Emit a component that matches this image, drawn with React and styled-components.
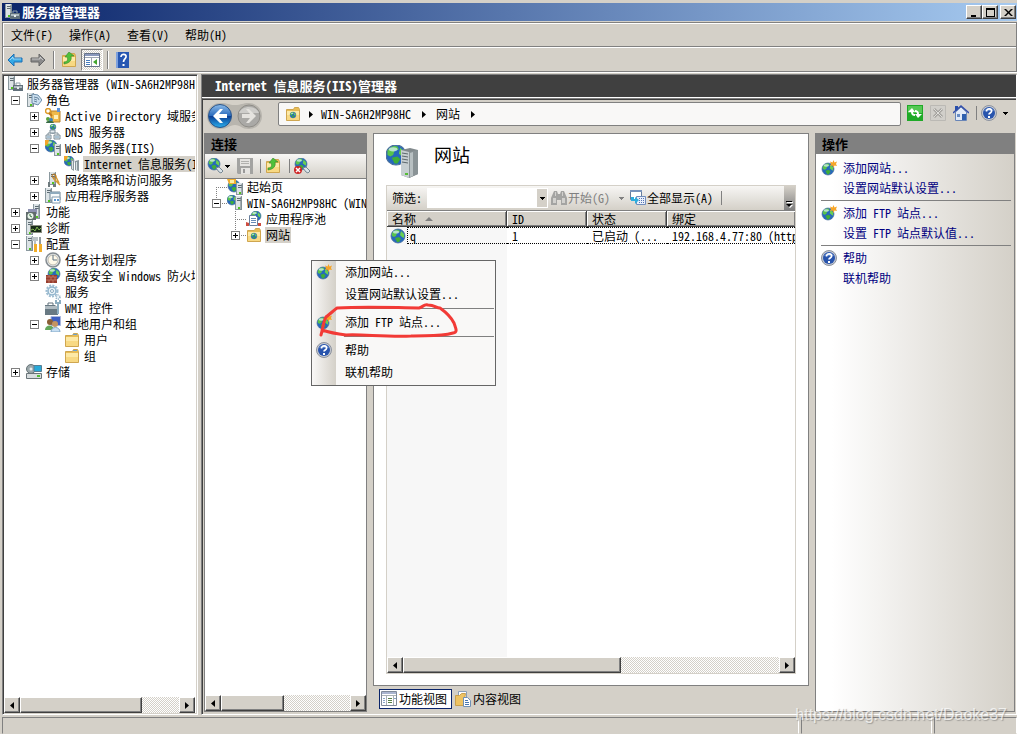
import { Fragment } from "react";
import styled, { createGlobalStyle, css } from "styled-components";

export default function App() {
  return (
    <Window>
      <GlobalStyle />
      <TitleBar>
        <ServerCaseIcon />
        <WindowTitle>服务器管理器</WindowTitle>
        <CaptionButton aria-label="最小化">
          <CaptionGlyph d="M2 8h5v2H2z" />
        </CaptionButton>
        <CaptionButton aria-label="最大化">
          <CaptionGlyph d="M1 1h9v9H1zM2 3v6h7V3z" />
        </CaptionButton>
        <CaptionButton aria-label="关闭" $gap>
          <CaptionGlyph d="M1 2h2l2.500 2.500L8 2h2L6.500 5.500L10 9H8L5.500 6.500L3 9H1l3.500-3.500z" />
        </CaptionButton>
      </TitleBar>

      <Chrome>
        <MenuBar>
          {MENUS.map((menu) => (
            <MenuButton key={menu}>{menu}</MenuButton>
          ))}
        </MenuBar>
        <MainToolbar>
          <ToolButton aria-label="后退">
            <ArrowIcon color="#35a9e6" edge="#1c6fb4" />
          </ToolButton>
          <ToolButton aria-label="前进" $gap={7}>
            <ArrowIcon color="#8b8b8b" edge="#666" flip />
          </ToolButton>
          <ToolDivider $gap={7} />
          <ToolButton aria-label="向上一级" $gap={6}>
            <FolderUpIcon />
          </ToolButton>
          <ToggleButton aria-label="显示/隐藏控制台树" aria-pressed="true">
            <ConsoleIcon />
          </ToggleButton>
          <ToolDivider $gap={4} />
          <ToolButton aria-label="帮助" $gap={5}>
            <HelpBookIcon />
          </ToolButton>
        </MainToolbar>
      </Chrome>

      <Workspace>
        <ServerPanel>
          <ServerTree>
            {SERVER_TREE.map((node) => (
              <TreeRow key={node.label} $level={node.level}>
                {node.level > 0 && <Expander state={node.state} />}
                <node.icon />
                <TreeLabel $selected={node.selected} $fill>
                  {node.label}
                </TreeLabel>
              </TreeRow>
            ))}
          </ServerTree>
          <ScrollBar thumb={77} />
        </ServerPanel>

        <ManagerPanel>
          <ManagerTitle>Internet 信息服务(IIS)管理器</ManagerTitle>
          <ManagerBody>
            <NavRow>
              <NavButtonsIcon />
              <AddressBar>
                <FolderGlobeIcon />
                <Crumb width={20} />
                <AddressText>WIN-SA6H2MP98HC</AddressText>
                <Crumb width={25} />
                <AddressText>网站</AddressText>
                <Crumb width={25} />
              </AddressBar>
              <NavTools>
                <ToolButton aria-label="刷新">
                  <RefreshIcon />
                </ToolButton>
                <ToolButton aria-label="停止">
                  <StopIcon />
                </ToolButton>
                <ToolButton aria-label="主页">
                  <HomeIcon />
                </ToolButton>
                <HelpGroup>
                  <ToolDivider $dark />
                  <ToolButton aria-label="联机帮助" $gap={4}>
                    <HelpIcon />
                  </ToolButton>
                  <DownCaret gap={6} />
                </HelpGroup>
              </NavTools>
            </NavRow>

            <Panes>
              <ConnectionsPane>
                <PaneHeader>连接</PaneHeader>
                <ConnectionsToolbar>
                  <ToolButton aria-label="连接">
                    <ConnectIcon />
                  </ToolButton>
                  <DownCaret gap={2} />
                  <ToolButton aria-label="保存" $gap={7}>
                    <SaveIcon />
                  </ToolButton>
                  <ToolDivider $dark $gap={7} />
                  <ToolButton aria-label="向上" $gap={4}>
                    <FolderUpIcon />
                  </ToolButton>
                  <ToolDivider $dark $gap={8} />
                  <ToolButton aria-label="断开连接" $gap={4}>
                    <ConnectIcon broken />
                  </ToolButton>
                </ConnectionsToolbar>
                <ConnectionsTree>
                  {CONNECTIONS.map((node) => (
                    <TreeRow key={node.label} $level={node.level}>
                      <Guide $corner={node.corner}>
                        {node.state && <Expander state={node.state} />}
                      </Guide>
                      <node.icon />
                      <TreeLabel $selected={node.selected}>
                        {node.label}
                      </TreeLabel>
                    </TreeRow>
                  ))}
                </ConnectionsTree>
                <ScrollBar thumb={49} />
              </ConnectionsPane>

              <CenterColumn>
                <FeaturePane>
                  <PageHeading>
                    <SitesIcon />
                    <HeadingText>网站</HeadingText>
                  </PageHeading>
                  <ListFrame>
                    <FilterBar>
                      <FilterLabel htmlFor="filter">筛选:</FilterLabel>
                      <FilterInput id="filter" type="text" />
                      <ComboButton aria-label="筛选选项">
                        <DownCaret />
                      </ComboButton>
                      <FilterButton disabled>
                        <BinocularsIcon />
                        开始(G)
                      </FilterButton>
                      <CaretSlot>
                        <DownCaret color="#808080" />
                      </CaretSlot>
                      <FilterButton>
                        <ShowAllIcon />
                        全部显示(A)
                      </FilterButton>
                      <ToolDivider $dark $gap={8} />
                      <OverflowButton aria-label="更多">
                        <OverflowGlyph />
                      </OverflowButton>
                    </FilterBar>
                    <ListArea>
                      <SiteTable>
                        <thead>
                          <tr>
                            <HeadCell $width={120}>
                              名称
                              <SortMark />
                            </HeadCell>
                            <HeadCell $width={80}>ID</HeadCell>
                            <HeadCell $width={80}>状态</HeadCell>
                            <HeadCell>绑定</HeadCell>
                          </tr>
                        </thead>
                        <tbody>
                          <tr>
                            <SiteCell $first>
                              <SiteName>
                                <GlobeIcon />
                                <FocusText>q</FocusText>
                              </SiteName>
                            </SiteCell>
                            <SiteCell>1</SiteCell>
                            <SiteCell>已启动 (...</SiteCell>
                            <SiteCell>192.168.4.77:80 (http)</SiteCell>
                          </tr>
                        </tbody>
                      </SiteTable>
                    </ListArea>
                    <ScrollBar thumb={58} />
                  </ListFrame>
                </FeaturePane>
                <ViewTabs>
                  <ViewTab $active>
                    <FeatureViewIcon />
                    功能视图
                  </ViewTab>
                  <ViewTab>
                    <ContentViewIcon />
                    内容视图
                  </ViewTab>
                </ViewTabs>
              </CenterColumn>

              <ActionsPane>
                <PaneHeader>操作</PaneHeader>
                <ActionList>
                  {ACTION_GROUPS.map((group, index) => (
                    <Fragment key={group[0].label}>
                      {index > 0 && <ActionRule />}
                      {group.map((action) => (
                        <ActionRow key={action.label}>
                          <IconSlot>{action.icon && <action.icon />}</IconSlot>
                          <ActionLink href="#">{action.label}</ActionLink>
                        </ActionRow>
                      ))}
                    </Fragment>
                  ))}
                </ActionList>
              </ActionsPane>
            </Panes>
          </ManagerBody>
        </ManagerPanel>
      </Workspace>

      <StatusBar>
        <StatusCell $grow />
        <StatusCell $width={131} />
        <StatusCell $width={83} />
      </StatusBar>

      <ContextMenu>
        {CONTEXT_GROUPS.map((group, index) => (
          <Fragment key={group[0].label}>
            {index > 0 && <MenuRule />}
            {group.map((action) => (
              <ContextItem key={action.label}>
                <IconSlot>{action.icon && <action.icon />}</IconSlot>
                {action.label}
              </ContextItem>
            ))}
          </Fragment>
        ))}
      </ContextMenu>
      <RedMark viewBox="0 0 144 40">
        <path d="M4 34C6 28 6 21 9 16C13 13 16 10 20 7C52 5 82 7 102 7C107 6 106 3 111 4C118 4 119 7 123 7C130 12 135 18 137 22C139 28 141 31 136 32C122 36 108 34 94 35C68 36 44 33 29 34C21 33 14 32 5 29" />
      </RedMark>
      <Watermark>https://blog.csdn.net/Daoke37</Watermark>
    </Window>
  );
}

/* ---------- small parts ---------- */

function CaptionGlyph({ d }) {
  return (
    <svg width="11" height="11" viewBox="0 0 11 11">
      <path d={d} fill="#000" fillRule="evenodd" />
    </svg>
  );
}

function DownCaret({ gap = 0, color = "#000" }) {
  return (
    <CaretSvg $gap={gap} viewBox="0 0 5 3" shapeRendering="crispEdges">
      <path d="M0 0h5v1H0zM1 1h3v1H1zM2 2h1v1H2z" fill={color} />
    </CaretSvg>
  );
}

function Expander({ state }) {
  if (!state) return <ExpanderSlot />;
  return (
    <ExpanderSlot>
      <ExpanderButton aria-label={state === "open" ? "折叠" : "展开"}>
        <svg width="9" height="9" viewBox="0 0 9 9" shapeRendering="crispEdges">
          <path d="M0 0h9v9H0z" fill="#808080" />
          <path d="M1 1h7v7H1z" fill="#fff" />
          <path d="M2 4h5v1H2z" />
          {state === "closed" && <path d="M4 2h1v5H4z" />}
        </svg>
      </ExpanderButton>
    </ExpanderSlot>
  );
}

function ScrollBar({ thumb }) {
  return (
    <ScrollTrack>
      <ScrollButton aria-label="向左滚动">
        <svg width="4" height="7" viewBox="0 0 4 7">
          <path d="M4 0v7L0 3.500z" />
        </svg>
      </ScrollButton>
      <ScrollLane>
        <ScrollThumb $size={thumb} />
      </ScrollLane>
      <ScrollButton aria-label="向右滚动">
        <svg width="4" height="7" viewBox="0 0 4 7">
          <path d="M0 0v7l4-3.500z" />
        </svg>
      </ScrollButton>
    </ScrollTrack>
  );
}

function Crumb({ width }) {
  return (
    <CrumbSlot $width={width}>
      <svg width="4" height="7" viewBox="0 0 4 7">
        <path d="M0 0v7l4-3.500z" />
      </svg>
    </CrumbSlot>
  );
}

/* ---------- icon pieces ---------- */

function Icon({ children, size = 16 }) {
  return (
    <IconSvg width={size} height={size} viewBox="0 0 16 16">
      {children}
    </IconSvg>
  );
}

function Globe({ x = 8, y = 8, r = 7 }) {
  return (
    <g transform={`translate(${x} ${y}) scale(${r / 7})`}>
      <circle r="7" fill="#2668bd" stroke="#49709c" strokeWidth="0.800" />
      <path d="M-6 -3C-4-6-1-7 1-6L2-4L-1-3L-2 0L-4 1L-6 0z" fill="#58c34b" />
      <path d="M-3 2L1 1L3 3L1 6L-1 6z" fill="#3fae38" />
      <path d="M3-5L6-2L6 2L4 1L2-1z" fill="#69cf52" />
      <ellipse cx="-2" cy="-4" rx="3" ry="1.500" fill="#dff4ff" opacity="0.700" />
    </g>
  );
}

function Server({ x = 0, y = 0, h = 14 }) {
  return (
    <g transform={`translate(${x} ${y})`}>
      <path d={`M0 0h7v${h}H0z`} fill="#8b999f" />
      <path d={`M1 0h5v${h - 1}H1z`} fill="#dce3e6" />
      <path d="M2 2h4v1H2zM2 4h4v1H2z" fill="#5d6b72" />
      <path d={`M5 1h2v${h - 1}H5z`} fill="#7d898f" opacity="0.600" />
      <path d={`M3 ${h - 3}h2v2H3z`} fill="#53c422" />
    </g>
  );
}

function FolderShape() {
  return (
    <>
      <path d="M1.500 3.500h7l1-2h4l1 2v11h-13z" fill="#e8bd55" stroke="#cfa650" />
      <path d="M2 5h12v9H2z" fill="#f8d983" />
      <path d="M2 5h12v4H2z" fill="#fde9a6" />
    </>
  );
}

function ServerCaseIcon() {
  return (
    <Icon>
      <Server x={1} y={0} h={14} />
      <path d="M6 9h10v6H6z" fill="#62717b" />
      <path d="M7 10h8v2H7z" fill="#adb9c0" />
      <path d="M9 9V7h4v2" fill="none" stroke="#8fa0a9" />
      <path d="M10 11h2v2h-2z" fill="#e9eef0" />
    </Icon>
  );
}

function RolesIcon() {
  return (
    <Icon>
      <Server x={1} y={1} h={14} />
      <path d="M6 2l6 1l4 5l-4 5l-6-2z" fill="#cbdfee" stroke="#6e8fab" />
      <path d="M8 5l4 1l1 2M8 7l3 1M8 9l3 1" fill="none" stroke="#6785a0" />
    </Icon>
  );
}

function DirectoryIcon() {
  return (
    <Icon>
      <path d="M6 3h9v11H6z" fill="#f0bb4b" stroke="#b7812c" />
      <path d="M12 0h3v4h-3z" fill="#5c91d8" />
      <path d="M9 7h4v4H9z" fill="#fff1ba" />
      <circle cx="3" cy="3" r="2.500" fill="none" stroke="#dd9b28" strokeWidth="1.500" />
      <path d="M4 5l3 3" stroke="#c27b16" strokeWidth="2" />
      <circle cx="3" cy="11" r="2" fill="#5aa13c" />
      <circle cx="6" cy="12" r="2" fill="#3c83bd" />
      <path d="M1 15c0-3 7-3 8 0z" fill="#386c45" />
    </Icon>
  );
}

function DnsIcon() {
  return (
    <Icon>
      <Globe x={8} y={3} r={3} />
      <path d="M8 6v4M3 11V9h10v2" fill="none" stroke="#81929c" />
      <path d="M5 6h5v3H5zM1 11h5v4H1zM9 11h6v4H9z" fill="#e5ecf0" stroke="#7e909b" />
      <path d="M2 13h3M10 13h4" stroke="#6a96b5" />
    </Icon>
  );
}

function WebServerIcon() {
  return (
    <Icon>
      <Globe x={6} y={6} r={6} />
      <path d="M0 0h4l-1 4l-3 2z" fill="#f2a52b" />
      <Server x={9} y={4} h={12} />
    </Icon>
  );
}

function IisIcon() {
  return (
    <Icon>
      <Globe x={5} y={5} r={5} />
      <path d="M0 0h4l-1 3l-3 2z" fill="#f2a52b" />
      <path d="M7 4l3-1v12l-3-2zM11 5l4-1v11l-4-1z" fill="#8c999f" />
      <path d="M8 5h1v8H8zM12 6h1v8h-1z" fill="#dbe4e7" />
    </Icon>
  );
}

function PolicyIcon() {
  return (
    <Icon>
      <Server x={4} y={0} h={13} />
      <path d="M10 3l4 8M8 6l7 7" stroke="#d79b35" strokeWidth="1.500" />
      <circle cx="9" cy="4" r="2" fill="none" stroke="#b77923" />
      <path d="M3 10h2v5H3zM8 12h3v3H8z" fill="#6e7a7e" />
    </Icon>
  );
}

function AppServerIcon() {
  return (
    <Icon>
      <Server x={0} y={0} h={15} />
      <path d="M5 4h10v8H5z" fill="#f7fafb" stroke="#6f8494" />
      <path d="M5 4h10v2H5z" fill="#8eaabd" />
      <path d="M7 9h8v6H7z" fill="#fff" stroke="#829aac" />
      <path d="M9 11h2v2H9zM12 11h2v2h-2z" fill="#5c97d1" />
    </Icon>
  );
}

function FeaturesIcon() {
  return (
    <Icon>
      <Server x={7} y={0} h={15} />
      <path d="M2 5h9v5H2z" fill="#8d91b0" />
      <path d="M0 8h10v8H0z" fill="#606b6b" />
      <circle cx="4.500" cy="12" r="3" fill="#e9f5e9" />
      <path d="M4 10v2l2 1" fill="none" stroke="#366c43" />
    </Icon>
  );
}

function DiagnosticsIcon() {
  return (
    <Icon>
      <Server x={0} y={0} h={15} />
      <path d="M4 5h12v8H4z" fill="#8a8e80" />
      <path d="M5 6h10v6H5z" fill="#182b18" />
      <path d="M5 10l2-1l2 2l2-4l2 3l2-2" fill="none" stroke="#80b64f" />
    </Icon>
  );
}

function ConfigIcon() {
  return (
    <Icon>
      <Server x={0} y={0} h={15} />
      <path d="M9 1v12M7 1v3h4V1" fill="none" stroke="#bac2c5" strokeWidth="2" />
      <path d="M8 8h3v8H8zM13 8h3v8h-3z" fill="#f2ae29" />
      <path d="M14 1v7" stroke="#6f7a7f" strokeWidth="1.500" />
    </Icon>
  );
}

function ClockIcon() {
  return (
    <Icon>
      <circle cx="8" cy="8" r="7" fill="#e4e9ed" stroke="#858c91" strokeWidth="1.500" />
      <circle cx="8" cy="8" r="5" fill="#fff9e9" stroke="#bcb9ad" />
      <path d="M8 3v5h4" fill="none" stroke="#5b7083" />
    </Icon>
  );
}

function FirewallIcon() {
  return (
    <Icon>
      <Globe x={9} y={6} r={6} />
      <path d="M1 7h11v8H1z" fill="#973d2e" />
      <path d="M1 9h11M1 12h11M4 7v2M8 7v2M6 9v3M10 9v3M4 12v3M8 12v3" stroke="#c98672" strokeWidth="0.700" />
    </Icon>
  );
}

function GearIcon() {
  return (
    <Icon>
      <circle cx="7" cy="7" r="5.500" fill="none" stroke="#9ebdd2" strokeWidth="2" strokeDasharray="2 1.200" />
      <circle cx="7" cy="7" r="4" fill="#e8f2f8" stroke="#8fb3cb" strokeWidth="1.500" />
      <circle cx="7" cy="7" r="1.500" fill="#fff" stroke="#88a9be" />
      <circle cx="13" cy="13" r="2" fill="#e8f2f8" stroke="#8dabc0" strokeWidth="1.500" strokeDasharray="1 1" />
    </Icon>
  );
}

function ToolboxIcon() {
  return (
    <Icon>
      <path d="M0 5h10l3 3v7H0z" fill="#687983" />
      <path d="M0 6h12v3H0z" fill="#b0bbc1" />
      <path d="M3 5V3h5v2" fill="none" stroke="#61717a" />
      <path d="M13 3v11M11 0v3h4V0" fill="none" stroke="#8cadc0" strokeWidth="2" />
    </Icon>
  );
}

function UsersIcon() {
  return (
    <Icon>
      <path d="M6 .5h9.500v9H6z" fill="#3f60c2" stroke="#a9b7dd" />
      <circle cx="5" cy="6" r="3" fill="#8b5f36" />
      <path d="M0 14c0-6 9-6 9 0z" fill="#63a65b" />
      <circle cx="10" cy="8" r="3" fill="#c49461" />
      <path d="M6 16c0-6 9-6 9 0z" fill="#c8dff2" stroke="#83a8c8" />
    </Icon>
  );
}

function FolderIcon() {
  return (
    <Icon>
      <FolderShape />
      <path d="M9 2h4v1H9z" fill="#6ca1cf" />
    </Icon>
  );
}

function StorageIcon() {
  return (
    <Icon>
      <circle cx="5" cy="5" r="4.500" fill="#9ca8ab" stroke="#667377" />
      <circle cx="5" cy="5" r="1.500" fill="#e8edee" />
      <path d="M8 1.500h7.500v6H8z" fill="#29a9d8" stroke="#587f94" />
      <path d="M.5 9.500h15v5H.5z" fill="#d8dddf" stroke="#697478" />
      <path d="M11 11h3v2h-3z" fill="#55bd36" />
    </Icon>
  );
}

function StartPageIcon() {
  return (
    <Icon>
      <Globe x={7} y={7} r={6} />
      <path d="M0 0h9v5H2z" fill="#f1af31" />
      <path d="M3 1h4v3H3z" fill="#fff1a5" />
      <Server x={9} y={4} h={12} />
    </Icon>
  );
}

function HostIcon() {
  return (
    <Icon>
      <Globe x={5} y={5} r={5} />
      <Server x={8} y={1} h={14} />
    </Icon>
  );
}

function AppPoolIcon() {
  return (
    <Icon>
      <Globe x={10} y={5} r={5} />
      <path d="M3.500 4.500h6l2 2v8h-8z" fill="#fff" stroke="#687f9d" />
      <path d="M5 7.500h5M5 9.500h5M5 11.500h5" stroke="#668bb7" />
      <path d="M0 11l3 1v3H0zM12 12h3v3h-3z" fill="#cd4d41" />
    </Icon>
  );
}

function FolderGlobeIcon() {
  return (
    <Icon>
      <FolderShape />
      <Globe x={8} y={9} r={3} />
    </Icon>
  );
}

function GlobeIcon() {
  return (
    <Icon>
      <Globe />
    </Icon>
  );
}

function NewSiteIcon() {
  return (
    <Icon>
      <Globe x={7} y={9} r={6} />
      <path d="M12.500 0l1 2.500l2.500-1l-1 2.500l1 2l-2.500-.5l-1 2.500l-1-2.500l-2.500.5l1-2l-1-2.500l2.500 1z" fill="#f7a527" />
    </Icon>
  );
}

function HelpIcon() {
  return (
    <Icon>
      <circle cx="8" cy="8" r="7.500" fill="#c5c9d2" stroke="#8c929e" />
      <circle cx="8" cy="8" r="6" fill="#2854ad" />
      <path d="M3 6c2-4 8-4 10 0z" fill="#83a8df" opacity="0.600" />
      <path d="M5.500 6.500c0-4 6-3 5 0c-.5 1.500-2.500 1.500-2.500 3" fill="none" stroke="#fff" strokeWidth="1.700" />
      <path d="M7 11h2v2H7z" fill="#fff" />
    </Icon>
  );
}

function ArrowIcon({ color, edge, flip }) {
  const mirror = flip ? "matrix(-1 0 0 1 16 0)" : undefined;
  return (
    <Icon>
      <path d="M1 8l6-6v4h8v4H7v4z" fill={color} stroke={edge} transform={mirror} />
      <path d="M3 8l3-3v2h8" fill="none" stroke="#fff" opacity="0.500" transform={mirror} />
    </Icon>
  );
}

function FolderUpIcon() {
  return (
    <Icon>
      <FolderShape />
      <path d="M3 10c4 0 4-3 3-5H4l4-5l5 4h-3c1 4-1 7-7 8z" fill="#4fc13a" stroke="#35842a" strokeWidth="0.600" />
    </Icon>
  );
}

function ConsoleIcon() {
  return (
    <Icon>
      <path d="M.5 1.500h15v13H.5z" fill="#fff" stroke="#687489" />
      <path d="M1 2h14v2H1z" fill="#8a99bd" />
      <path d="M1 5h14v1H1zM7 6h1v8H7z" fill="#9da5b2" />
      <path d="M2 8h4v1H2zM2 10h4v1H2zM2 12h4v1H2z" fill="#477dbe" />
      <path d="M13 7v6l-4-3z" fill="#43a52e" />
    </Icon>
  );
}

function HelpBookIcon() {
  return (
    <Icon>
      <path d="M2 0h13v16H2z" fill="#2757b2" />
      <path d="M2 0h2v16H2z" fill="#7da0dd" />
      <path d="M7 5c0-4 6-3 5 0c-.5 2-2.500 2-2.500 5" fill="none" stroke="#fff" strokeWidth="1.700" />
      <path d="M8.500 12h2v2h-2z" fill="#fff" />
    </Icon>
  );
}

function ConnectIcon({ broken }) {
  return (
    <Icon>
      <Globe x={7} y={6} r={6} />
      <path d="M9 10l3-1l4 4l-2 2l-2-1z" fill="#dbe4e9" stroke="#778893" />
      {broken && (
        <>
          <circle cx="4" cy="12" r="4" fill="#ce2424" />
          <path d="M2 10l4 4M6 10l-4 4" stroke="#fff" strokeWidth="1.500" />
        </>
      )}
    </Icon>
  );
}

function SaveIcon() {
  return (
    <Icon>
      <path d="M0 0h16v16H1L0 15z" fill="#a3a3a1" />
      <path d="M3 1h10v7H3zM4 10h9v6H4z" fill="#e5e4e1" />
      <path d="M4 3h8v1H4zM4 5h8v1H4z" fill="#b1b1ae" />
      <path d="M6 11h2v4H6z" fill="#999" />
    </Icon>
  );
}

function RefreshIcon() {
  return (
    <Icon>
      <path d="M0 0h16v16H0z" fill="#1faa27" />
      <path d="M1 1h14v7H1z" fill="#55c853" />
      <path d="M5 3L1 7h3c0 3 2 4 4 4V9C7 9 6 9 6 7h2zM11 13l4-4h-3c0-3-2-4-4-4v2c1 0 2 0 2 2H8z" fill="#fff" />
    </Icon>
  );
}

function StopIcon() {
  return (
    <Icon>
      <path d="M.5 .5h15v15H.5z" fill="#d1cfca" stroke="#bbb9b4" />
      <path d="M4 4l8 8M12 4l-8 8" stroke="#a4a29e" strokeWidth="3" />
      <path d="M4 4l8 8M12 4l-8 8" stroke="#deddd9" />
    </Icon>
  );
}

function HomeIcon() {
  return (
    <Icon>
      <path d="M2 1h3v5H2z" fill="#284faa" />
      <path d="M2.500 7L8 2l5.500 5v8.500h-11z" fill="#e2eaf7" stroke="#6885b7" />
      <path d="M0 8l8-7l8 7" fill="none" stroke="#334fab" strokeWidth="1.500" />
      <path d="M4 9h3v3H4z" fill="#698cc3" />
      <path d="M9 9h4v6H9z" fill="#2e5fae" />
    </Icon>
  );
}

function BinocularsIcon() {
  return (
    <Icon>
      <path d="M3 1h3l1 3h2l1-3h3l3 7v7h-6v-5H6v5H0V8z" fill="#a4a4a2" />
      <path d="M2 8h3v5H2zM11 8h3v5h-3zM4 2h1v4H4zM11 2h1v4h-1z" fill="#d2d1ce" />
    </Icon>
  );
}

function ShowAllIcon() {
  return (
    <Icon>
      <path d="M.5 .5h11v9H.5z" fill="#fff" stroke="#667d9e" />
      <path d="M0 0h12v2H0z" fill="#7893bc" />
      <path d="M6.500 6.500h9v8h-9z" fill="#e9effa" stroke="#718dbc" />
      <path d="M9.500 8v6M11.500 8v6M13.500 8v6" stroke="#5574b5" strokeDasharray="1 1" />
      <path d="M1 7v4h4v3l4-4l-4-3v2H4V7z" fill="#2daddd" />
    </Icon>
  );
}

function FeatureViewIcon() {
  return (
    <Icon>
      <path d="M.5 .5h15v14H.5z" fill="#fff" stroke="#808a99" />
      <path d="M1 1h14v2H1z" fill="#aab5cf" />
      <path d="M1 4h14v1H1zM5 5h1v9H5zM12 5h1v9h-1z" fill="#abb2b6" />
      <path d="M2 7.500h2M2 9.500h2M2 11.500h2M13 7.500h2" stroke="#8aa6c8" />
      <path d="M7 7.500h4M7 9.500h4M7 11.500h4" stroke="#598045" />
    </Icon>
  );
}

function ContentViewIcon() {
  return (
    <Icon>
      <path d="M3.500 .5h8v10h-8z" fill="#fff" stroke="#899eb8" />
      <path d="M.5 4.500h4l2-2h4l-2 12h-8z" fill="#eec363" stroke="#c9a04e" />
      <path d="M8.500 6.500h4l3 3v6h-7z" fill="#fff" stroke="#6e8fb5" />
      <path d="M10 9.500h3M10 11.500h4M10 13.500h4" stroke="#4776b2" />
    </Icon>
  );
}

function SitesIcon() {
  return (
    <svg width="34" height="34" viewBox="0 0 34 34">
      <Globe x={10} y={10} r={10} />
      <path d="M15 5l9-2l8 2v24l-9 4l-8-3z" fill="#828a8d" />
      <path d="M15 5l8 2v26l-8-3z" fill="#c7cfd1" />
      <path d="M23 7l9-2v24l-9 4z" fill="#8a9396" />
      <path d="M24 8l3-1v24l-3 1z" fill="#b8c0c2" />
      <path d="M16 8l6 1M16 11l6 1M16 14l6 1M16 17l6 1" stroke="#5d686c" />
      <path d="M19 28h3v2h-3z" fill="#55bd36" />
    </svg>
  );
}

function NavButtonsIcon() {
  return (
    <NavButtons>
      <svg width="56" height="28" viewBox="0 0 56 28">
        <defs>
          <linearGradient id="navBlue" x2="0" y2="1">
            <stop offset="0" stopColor="#8bbbe9" />
            <stop offset="0.480" stopColor="#2d6cbd" />
            <stop offset="0.500" stopColor="#0a3a91" />
            <stop offset="1" stopColor="#2bb0ee" />
          </linearGradient>
        </defs>
        <path d="M13 1c9 0 8 2 15 2s7-2 14-2a13 13 0 010 26c-8 0-8-4-14-4s-7 4-15 4a13 13 0 010-26z" fill="#b8b5ae" />
        <circle cx="13" cy="14" r="11.500" fill="url(#navBlue)" stroke="#29548a" />
        <circle cx="42" cy="14" r="11" fill="#aaa9a6" stroke="#8f8d88" />
        <path d="M32 11c3-8 17-8 20 0z" fill="#cecdca" />
        <path d="M6 14l7-7h3l-4 5h8v4h-8l4 5h-3z" fill="#fff" />
        <path d="M49 14l-7-7h-3l4 5h-8v4h8l-4 5h3z" fill="#e5e3df" />
      </svg>
    </NavButtons>
  );
}

function OverflowGlyph() {
  return (
    <svg width="7" height="7" viewBox="0 0 7 7">
      <path d="M1 1h6v1H1zM1 4h6L4 7z" fill="#fff" />
      <path d="M0 0h6v1H0zM0 3h6L3 6z" />
    </svg>
  );
}

/* ---------- data ---------- */

const MENUS = ["文件(F)", "操作(A)", "查看(V)", "帮助(H)"];

const SERVER_TREE = [
  { level: 0, icon: ServerCaseIcon, label: "服务器管理器 (WIN-SA6H2MP98HC)" },
  { level: 1, state: "open", icon: RolesIcon, label: "角色" },
  { level: 2, state: "closed", icon: DirectoryIcon, label: "Active Directory 域服务" },
  { level: 2, state: "closed", icon: DnsIcon, label: "DNS 服务器" },
  { level: 2, state: "open", icon: WebServerIcon, label: "Web 服务器(IIS)" },
  { level: 3, icon: IisIcon, label: "Internet 信息服务(IIS)管理器", selected: true },
  { level: 2, state: "closed", icon: PolicyIcon, label: "网络策略和访问服务" },
  { level: 2, state: "closed", icon: AppServerIcon, label: "应用程序服务器" },
  { level: 1, state: "closed", icon: FeaturesIcon, label: "功能" },
  { level: 1, state: "closed", icon: DiagnosticsIcon, label: "诊断" },
  { level: 1, state: "open", icon: ConfigIcon, label: "配置" },
  { level: 2, state: "closed", icon: ClockIcon, label: "任务计划程序" },
  { level: 2, state: "closed", icon: FirewallIcon, label: "高级安全 Windows 防火墙" },
  { level: 2, icon: GearIcon, label: "服务" },
  { level: 2, icon: ToolboxIcon, label: "WMI 控件" },
  { level: 2, state: "open", icon: UsersIcon, label: "本地用户和组" },
  { level: 3, icon: FolderIcon, label: "用户" },
  { level: 3, icon: FolderIcon, label: "组" },
  { level: 1, state: "closed", icon: StorageIcon, label: "存储" },
];

const CONNECTIONS = [
  { level: 1, corner: "top", icon: StartPageIcon, label: "起始页" },
  { level: 1, corner: "last", state: "open", icon: HostIcon, label: "WIN-SA6H2MP98HC (WIN-SA6H2MP98HC)" },
  { level: 2, corner: "middle", icon: AppPoolIcon, label: "应用程序池" },
  { level: 2, corner: "last", state: "closed", icon: FolderGlobeIcon, label: "网站", selected: true },
];

const ADD_SITE = { icon: NewSiteIcon, label: "添加网站..." };
const SITE_DEFAULTS = { label: "设置网站默认设置..." };
const ADD_FTP = { icon: NewSiteIcon, label: "添加 FTP 站点..." };
const FTP_DEFAULTS = { label: "设置 FTP 站点默认值..." };
const HELP = { icon: HelpIcon, label: "帮助" };
const ONLINE_HELP = { label: "联机帮助" };

const ACTION_GROUPS = [
  [ADD_SITE, SITE_DEFAULTS],
  [ADD_FTP, FTP_DEFAULTS],
  [HELP, ONLINE_HELP],
];

const CONTEXT_GROUPS = [[ADD_SITE, SITE_DEFAULTS], [ADD_FTP], [HELP, ONLINE_HELP]];

/* ---------- styles ---------- */

const GlobalStyle = createGlobalStyle`
  * {
    box-sizing: border-box;
  }

  body {
    margin: 0;
    background: #d4d0c8;
    color: #000;
    font-family: "Noto Sans CJK SC", sans-serif;
    font-feature-settings: "hwid";
    font-size: 12px;
    line-height: 16px;
  }

  button,
  input {
    margin: 0;
    padding: 0;
    border: none;
    border-radius: 0;
    background: none;
    color: inherit;
    font: inherit;
    font-feature-settings: inherit;
  }
`;

const raised = css`
  border: 1px solid;
  border-color: #fff #404040 #404040 #fff;
  box-shadow: inset -1px -1px #808080;
  background: #d4d0c8;
`;

const dither = css`
  background: repeating-conic-gradient(#fff 0 25%, #d4d0c8 0 50%) 0 0 / 2px 2px;
`;

const Window = styled.div`
  position: relative;
  display: flex;
  flex-direction: column;
  height: 100vh;
  padding: 3px 0 0 2px;
  overflow: hidden;
  white-space: nowrap;
`;

const TitleBar = styled.header`
  display: flex;
  align-items: center;
  flex: none;
  height: 18px;
  padding: 0 1px 0 2px;
  margin-bottom: 1px;
  background: linear-gradient(to right, #0a246a, #a6caf0);
`;

const WindowTitle = styled.h1`
  flex: 1;
  margin: 0 0 0 2px;
  color: #fff;
  font-size: 13px;
  font-weight: 700;
`;

const CaptionButton = styled.button`
  ${raised}
  display: flex;
  align-items: center;
  justify-content: center;
  width: 16px;
  height: 14px;
  margin-left: ${({ $gap }) => ($gap ? "2px" : "0")};
`;

const Chrome = styled.div`
  flex: none;
  margin-bottom: 2px;
  border: 1px solid #808080;
  box-shadow: inset 1px 1px #fff, 0 1px #fff;
`;

const MenuBar = styled.nav`
  display: flex;
  align-items: center;
  gap: 16px;
  height: 24px;
  padding-left: 8px;
  border-bottom: 1px solid #808080;
`;

const MenuButton = styled.button``;

const MainToolbar = styled.div`
  display: flex;
  align-items: center;
  height: 24px;
  padding-left: 4px;
  border-top: 1px solid #fff;
`;

const ToolButton = styled.button`
  display: flex;
  margin-left: ${({ $gap }) => $gap || 0}px;
`;

const ToggleButton = styled.button`
  ${dither}
  display: flex;
  align-items: center;
  justify-content: center;
  width: 22px;
  height: 22px;
  margin-left: 4px;
  border: 1px solid;
  border-color: #808080 #fff #fff #808080;
`;

const ToolDivider = styled.span`
  flex: none;
  width: ${({ $dark }) => ($dark ? "1px" : "2px")};
  height: ${({ $dark }) => ($dark ? "14px" : "18px")};
  margin-left: ${({ $gap }) => $gap || 0}px;
  border-left: 1px solid #808080;
  background: #fff;
`;

const CaretSvg = styled.svg`
  flex: none;
  width: 5px;
  height: 3px;
  margin-left: ${({ $gap }) => $gap}px;
`;

const IconSvg = styled.svg`
  flex: none;
  display: block;
`;

const Workspace = styled.div`
  flex: 1;
  display: flex;
  gap: 3px;
  min-height: 0;
  margin-bottom: 2px;
`;

const ServerPanel = styled.aside`
  display: flex;
  flex-direction: column;
  flex: 0 0 196px;
  min-width: 0;
  padding: 1px 2px 1px 1px;
  border: 1px solid;
  border-color: #808080 #fff #fff #808080;
  box-shadow: inset 1px 1px #404040, inset -1px -1px #d4d0c8;
  background: #fff;
`;

const ServerTree = styled.ul`
  flex: 1;
  margin: 0;
  padding: 0 0 0 3px;
  list-style: none;
  overflow: hidden;
`;

const TreeRow = styled.li`
  display: flex;
  align-items: center;
  height: 16px;
  padding-left: ${({ $level }) => Math.max($level - 1, 0) * 19}px;
`;

const ExpanderSlot = styled.span`
  display: flex;
  flex: none;
  width: 19px;
  padding-left: 4px;
`;

const ExpanderButton = styled.button`
  display: flex;
`;

const TreeLabel = styled.span`
  flex: ${({ $fill }) => ($fill ? "1" : "none")};
  height: 16px;
  margin-left: 3px;
  padding: 0 1px;
  background: ${({ $selected }) => ($selected ? "#d4d0c8" : "none")};
`;

const ScrollTrack = styled.div`
  ${dither}
  display: flex;
  flex: none;
  height: 16px;
`;

const ScrollButton = styled.button`
  ${raised}
  display: flex;
  align-items: center;
  justify-content: center;
  flex: none;
  width: 16px;
  height: 16px;
`;

const ScrollLane = styled.div`
  flex: 1;
`;

const ScrollThumb = styled.div`
  ${raised}
  width: ${({ $size }) => $size}%;
  height: 16px;
`;

const ManagerPanel = styled.main`
  display: flex;
  flex-direction: column;
  flex: 1;
  min-width: 0;
  border: 1px solid;
  border-color: #808080 #fff #fff #808080;
`;

const ManagerTitle = styled.h2`
  flex: none;
  height: 23px;
  margin: 0;
  padding: 0 13px;
  border-bottom: 1px solid #fff;
  background: #404040;
  color: #fff;
  font-size: 13px;
  font-weight: 700;
  line-height: 22px;
`;

const ManagerBody = styled.div`
  display: flex;
  flex-direction: column;
  flex: 1;
  min-height: 0;
  padding: 3px 0 2px 1px;
  border-top: 1px solid #808080;
  border-left: 1px solid #404040;
  box-shadow: inset 0 1px #404040;
`;

const NavRow = styled.div`
  display: flex;
  flex: none;
  height: 31px;
`;

const NavButtons = styled.div`
  flex: none;
  width: 74px;
  padding-left: 3px;
  line-height: 0;
`;

const AddressBar = styled.div`
  display: flex;
  align-items: center;
  flex: 1;
  height: 24px;
  padding-left: 6px;
  border: 1px solid #808080;
  border-radius: 2px;
  background: #f9f8f7;
`;

const AddressText = styled.span``;

const CrumbSlot = styled.span`
  display: flex;
  justify-content: center;
  width: ${({ $width }) => $width}px;
`;

const NavTools = styled.div`
  display: flex;
  align-items: center;
  gap: 7px;
  height: 22px;
  padding: 0 8px 0 6px;
`;

const HelpGroup = styled.div`
  display: flex;
  align-items: center;
`;

const Panes = styled.div`
  display: flex;
  flex: 1;
  gap: 6px;
  min-height: 0;
`;

const ConnectionsPane = styled.section`
  display: flex;
  flex-direction: column;
  flex: 0 0 163px;
  min-width: 0;
  border: 1px solid #808080;
  background: #fff;
`;

const PaneHeader = styled.h3`
  flex: none;
  height: 20px;
  margin: 0;
  padding-left: 6px;
  background: #808080;
  font-size: 13px;
  font-weight: 700;
  line-height: 20px;
`;

const ConnectionsToolbar = styled.div`
  display: flex;
  align-items: center;
  flex: none;
  height: 25px;
  padding-left: 2px;
  border-bottom: 1px solid #808080;
  background: linear-gradient(#f7f6f4, #d4d0c8);
`;

const ConnectionsTree = styled.ul`
  flex: 1;
  margin: 0;
  padding: 0 0 0 3px;
  list-style: none;
  overflow: hidden;
`;

const dotsAcross = "repeating-linear-gradient(to right, #808080 0 1px, transparent 1px 2px)";
const dotsDown = "repeating-linear-gradient(#808080 0 1px, transparent 1px 2px)";
const GUIDES = {
  top: `${dotsAcross} 8px 8px / 11px 1px no-repeat, ${dotsDown} 8px 8px / 1px 8px no-repeat`,
  middle: `${dotsAcross} 8px 8px / 11px 1px no-repeat, ${dotsDown} 8px 0 / 1px 16px no-repeat`,
  last: `${dotsAcross} 8px 8px / 11px 1px no-repeat, ${dotsDown} 8px 0 / 1px 8px no-repeat`,
};

const Guide = styled.span`
  display: flex;
  align-items: center;
  flex: none;
  width: 19px;
  height: 16px;
  background: ${({ $corner }) => GUIDES[$corner]};
`;

const CenterColumn = styled.section`
  display: flex;
  flex-direction: column;
  flex: 1;
  min-width: 0;
`;

const FeaturePane = styled.div`
  display: flex;
  flex-direction: column;
  flex: 1;
  min-height: 0;
  padding: 11px 12px;
  border: 1px solid #808080;
  background: #fff;
`;

const PageHeading = styled.div`
  display: flex;
  flex: none;
  height: 40px;
`;

const HeadingText = styled.h2`
  margin: 0 0 0 14px;
  font-size: 18px;
  font-weight: 400;
  line-height: 18px;
`;

const ListFrame = styled.div`
  display: flex;
  flex-direction: column;
  flex: 1;
  min-height: 0;
  border: 1px solid #d4d0c8;
`;

const FilterBar = styled.div`
  display: flex;
  align-items: center;
  flex: none;
  height: 25px;
  padding-left: 5px;
  border-bottom: 1px solid #808080;
  background: linear-gradient(#f7f6f4, #d4d0c8);
`;

const FilterLabel = styled.label`
  width: 35px;
`;

const FilterInput = styled.input`
  width: 110px;
  height: 20px;
  background: #fff;
`;

const ComboButton = styled.button`
  display: flex;
  align-items: center;
  justify-content: center;
  width: 11px;
  height: 20px;
  margin-right: 3px;
  border: 1px solid #fff;
  border-left: none;
  background: #d4d0c8;
`;

const FilterButton = styled.button`
  display: flex;
  align-items: center;
  gap: 1px;

  &:disabled {
    color: #808080;
  }
`;

const CaretSlot = styled.span`
  display: flex;
  justify-content: center;
  width: 20px;
  padding-left: 3px;
`;

const OverflowButton = styled.button`
  display: flex;
  align-items: flex-end;
  justify-content: center;
  width: 11px;
  height: 24px;
  margin-left: auto;
  padding-bottom: 2px;
  background: linear-gradient(#d4d0c8, #808080);
`;

const ListArea = styled.div`
  flex: 1;
  min-height: 0;
  overflow: hidden;
  background: linear-gradient(#f7f7f7, #f7f7f7) 0 0 / 120px 100% no-repeat;
`;

const SiteTable = styled.table`
  width: 100%;
  table-layout: fixed;
  border-collapse: separate;
  border-spacing: 0;
`;

const HeadCell = styled.th`
  width: ${({ $width }) => ($width ? `${$width}px` : "auto")};
  height: 16px;
  padding: 0 5px;
  border-right: 1px solid #404040;
  border-bottom: 1px solid #404040;
  box-shadow: inset 1px 1px #fff, inset -1px -1px #808080;
  background: #d4d0c8;
  font-weight: 400;
  line-height: 15px;
  text-align: left;
  overflow: hidden;

  &:last-child {
    border-right: none;
  }
`;

const SortMark = styled.span`
  display: inline-block;
  margin: 0 0 3px 9px;
  border: 4px solid transparent;
  border-top: none;
  border-bottom-color: #808080;
`;

const SiteCell = styled.td`
  height: 17px;
  padding: ${({ $first }) => ($first ? "0" : "0 0 0 5px")};
  border: 1px dotted #000;
  border-width: ${({ $first }) => ($first ? "0" : "1px 0")};
  line-height: 15px;
  overflow: hidden;
`;

const SiteName = styled.div`
  display: flex;
  align-items: center;
  padding-left: 3px;
`;

const FocusText = styled.span`
  flex: 1;
  height: 17px;
  margin-left: 1px;
  padding-left: 2px;
  border: 1px dotted #000;
  border-right: none;
`;

const ViewTabs = styled.div`
  display: flex;
  flex: none;
  gap: 1px;
  padding: 3px 6px;
`;

const ViewTab = styled.button`
  display: flex;
  align-items: center;
  gap: 2px;
  height: 20px;
  padding: 0 4px 0 1px;
  border: 1px solid ${({ $active }) => ($active ? "#0a246a" : "transparent")};
  background: ${({ $active }) => ($active ? "#fff" : "none")};
`;

const ActionsPane = styled.aside`
  flex: 0 0 200px;
  margin-right: 1px;
  border: 1px solid #808080;
  background: linear-gradient(to right, #fff 8%, #d4d0c8);
`;

const ActionList = styled.div`
  padding: 4px 3px 0 5px;
`;

const ActionRow = styled.div`
  display: flex;
  align-items: center;
  height: 20px;
`;

const IconSlot = styled.span`
  flex: none;
  width: 22px;
`;

const ActionLink = styled.a`
  color: #000080;
  text-decoration: none;
`;

const ActionRule = styled.hr`
  height: 1px;
  margin: 2px 0;
  border: none;
  background: #808080;
`;

const StatusBar = styled.footer`
  display: flex;
  flex: none;
  gap: 2px;
  height: 17px;
`;

const StatusCell = styled.div`
  flex: ${({ $grow, $width }) => ($grow ? "1" : `0 0 ${$width}px`)};
  border: 1px solid;
  border-color: #808080 #fff transparent #808080;
`;

const ContextMenu = styled.div`
  position: absolute;
  top: 260px;
  left: 311px;
  width: 185px;
  padding-bottom: 2px;
  border: 1px solid #666;
  background: linear-gradient(to right, #f9f8f7, #d4d0c8) 0 0 / 24px 100% no-repeat #f9f8f7;

  ${IconSlot} {
    width: 29px;
  }
`;

const ContextItem = styled.button`
  display: flex;
  align-items: center;
  width: 100%;
  height: 22px;
  padding-left: 4px;
`;

const MenuRule = styled.hr`
  height: 1px;
  margin: 3px 1px 2px 32px;
  border: none;
  background: #808080;
`;

const RedMark = styled.svg`
  position: absolute;
  top: 301px;
  left: 317px;
  width: 144px;
  height: 40px;
  fill: none;
  stroke: #f23a36;
  stroke-width: 3;
  stroke-linecap: round;
  stroke-linejoin: round;
  pointer-events: none;
`;

const Watermark = styled.span`
  position: absolute;
  right: 10px;
  bottom: 10px;
  color: rgba(255, 255, 255, 0.7);
  font-family: "Liberation Sans", sans-serif;
  font-size: 16px;
  line-height: 18px;
  text-shadow: 1px 1px 1px rgba(110, 110, 110, 0.5);
`;
